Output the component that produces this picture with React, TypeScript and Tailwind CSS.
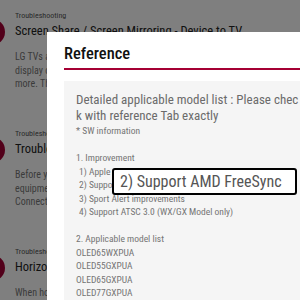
const items = [
  {
    title: 'Screen Share / Screen Mirroring - Device to TV',
    body: ['LG TVs allow you', 'display content on', 'more. This guide'],
  },
  {
    title: 'Troubleshooting Your External Device Connection',
    body: ['Before you begin', 'equipment is conn', 'Connection issues'],
  },
  {
    title: 'Horizontal or Vertical Lines on the Screen',
    body: ['When horizontal'],
  },
];

const improvements = [
  '1) Apple AirPlay 2 and HomeKit support',
  '2) Support AMD FreeSync',
  '3) Sport Alert improvements',
  '4) Support ATSC 3.0 (WX/GX Model only)',
];

const models = ['OLED65WXPUA', 'OLED55GXPUA', 'OLED65GXPUA', 'OLED77GXPUA'];

function ArticleItem({ title, body }: { title: string; body: string[] }) {
  return (
    <div className="flex gap-[10px] h-[118px]">
      <div className="-ml-[21px] mt-[9px] w-[26px] h-[26px] shrink-0 rounded-full bg-[#a50034]" />
      <div className="whitespace-nowrap">
        <div className="text-[8px] leading-[12px] text-[#555]">Troubleshooting</div>
        <div className="text-[12.5px] leading-[18px] text-[#222]">{title}</div>
        <div className="mt-[10px] text-[10px] leading-[13.5px] text-[#777]">
          {body.map((line) => (
            <div key={line}>{line}</div>
          ))}
        </div>
      </div>
    </div>
  );
}

export default function App() {
  return (
    <div className="relative w-[300px] h-[300px] overflow-hidden bg-white font-['Roboto_Condensed',_Roboto,_sans-serif]">
      <div className="flex flex-col pt-[10px]">
        {items.map((item) => (
          <ArticleItem key={item.title} {...item} />
        ))}
      </div>

      <div className="absolute inset-0 bg-black/50" />

      <div className="absolute left-[47px] top-[32px] w-[420px] h-[420px] bg-white pl-[17px]">
        <h2 className="pt-[12px] text-[16.5px] leading-[20px] font-medium text-[#111]">Reference</h2>
        <div className="mt-[4px] h-[2px] bg-[#a50034]" />

        <div className="mt-[11px] bg-[#f5f5f5] pl-[12px] pt-[11px] whitespace-nowrap">
          <div className="text-[13px] leading-[16px] text-[#6b6b6b]">
            <div>Detailed applicable model list : Please chec</div>
            <div>k with reference Tab exactly</div>
          </div>
          <div className="text-[9.5px] leading-[13.5px] text-[#747474]">
            <div>* SW information</div>
            <div className="h-[13.5px]" />
            <div>1. Improvement</div>
            {improvements.map((line) => (
              <div key={line} className="pl-[3px]">{line}</div>
            ))}
            <div className="h-[13.5px]" />
            <div>2. Applicable model list</div>
            {models.map((m) => (
              <div key={m}>{m}</div>
            ))}
          </div>
        </div>

        <div className="absolute left-[65px] top-[136px] w-[185px] h-[27px] flex items-center pl-[6px] border-2 border-black rounded-[3px] bg-white text-[16px] text-[#555] whitespace-nowrap">
          2) Support AMD FreeSync
        </div>
      </div>
    </div>
  );
}
